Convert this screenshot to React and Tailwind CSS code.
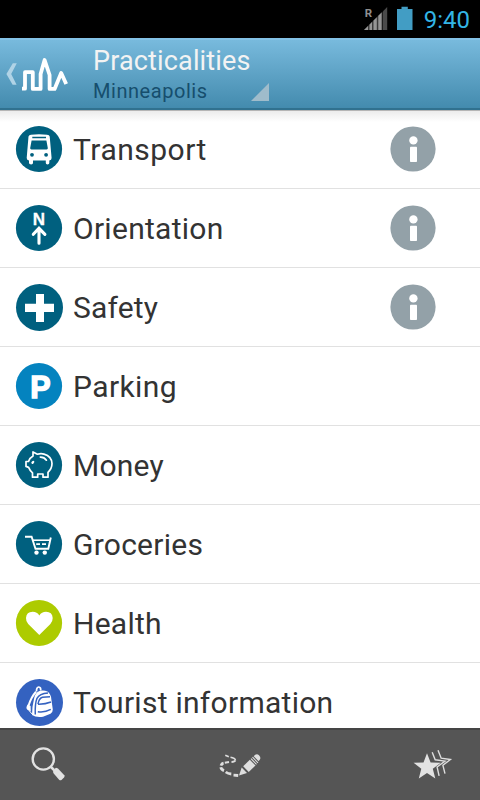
import React from 'react';

const rows = [
  { label: 'Transport', icon: 'bus', color: '#00607f', info: true, spacing: 'tracking-[0.5px]' },
  { label: 'Orientation', icon: 'north', color: '#00607f', info: true, spacing: 'tracking-[0.28px]' },
  { label: 'Safety', icon: 'plus', color: '#00607f', info: true, spacing: 'tracking-[0.15px]' },
  { label: 'Parking', icon: 'parking', color: '#0483bf', spacing: 'tracking-[0.4px]' },
  { label: 'Money', icon: 'pig', color: '#00607f', spacing: 'tracking-[0.2px]' },
  { label: 'Groceries', icon: 'cart', color: '#00607f', spacing: 'tracking-[0.25px]' },
  { label: 'Health', icon: 'heart', color: '#adcb00', spacing: 'tracking-[0.25px]' },
  { label: 'Tourist information', icon: 'pack', color: '#3462c0', spacing: 'tracking-[0.27px]' },
];

const glyphs = {
  bus: (
    <>
      <path fill="#fff" d="M13.5 11.5Q14 10 16 9.8Q24 8.7 32 9.8Q34.5 10 34.7 11.5L36.6 33Q36.6 35.2 34.3 35.4V38Q34.3 39.4 32.5 39.4Q30.8 39.4 30.8 38V35.4H18V38Q18 39.4 16.2 39.4Q14 39.4 14 38V35.4Q11.7 35.2 11.7 33Z" />
      <path fill="#00607f" d="M17.3 11.7H31V13.2H17.3ZM16.6 15.6H31.4L32.8 23Q33 24.4 31.6 24.4H16.4Q15 24.4 15.2 23Z" />
      <circle cx="17" cy="29.8" r="1.9" fill="#00607f" />
      <circle cx="31.1" cy="29.8" r="1.9" fill="#00607f" />
    </>
  ),
  north: (
    <>
      <text x="23.9" y="20.6" textAnchor="middle" fill="#fff" stroke="#fff" strokeWidth=".3" className="font-['Liberation_Sans',sans-serif] text-[17px] font-bold">N</text>
      <path fill="none" stroke="#fff" strokeWidth="3.1" strokeLinecap="round" d="M24 25V39.3M18.3 30.3L24 24.3L29.9 30.3" />
    </>
  ),
  plus: <path fill="#fff" d="M21 11H29V20.7H39V29H29V39H21V29H10V20.7H21Z" />,
  parking: (
    <text x="25.4" y="35.5" textAnchor="middle" fill="#fff" stroke="#fff" strokeWidth="1.4" className="font-['Liberation_Sans',sans-serif] text-[30.5px] font-bold">P</text>
  ),
  pig: (
    <g fill="none" stroke="#fff" strokeWidth="1.7" strokeLinejoin="round" strokeLinecap="round">
      <path d="M18 15V10.9L22.4 13.2Q26 12.2 29 13.1Q36.8 15.5 37 22.5Q37 27.5 33 31.3V36.2H28V33H22.7V36.2H17.5V31.8Q15 29.8 13.6 26.4L11 25.4V20.5H13.5Q14.5 17 18 15Z" />
      <path strokeWidth="1.7" d="M25.3 16.1Q29.2 16 31.4 19.2" />
      <path strokeWidth="2.3" d="M17.5 21.8L18.2 20.9" />
    </g>
  ),
  cart: (
    <g fill="none" stroke="#fff" strokeWidth="1.6">
      <path strokeWidth="1.9" d="M10 16.8H16.6L20.5 28.7H33.3L35.8 17.5" />
      <path d="M17.8 20.2H35" />
      <path strokeWidth="1.8" d="M21.2 24.2H25M27 24.2H31" />
      <circle cx="21.5" cy="32.6" r="2.2" fill="#fff" stroke="none" />
      <circle cx="29.8" cy="32.6" r="2.2" fill="#fff" stroke="none" />
    </g>
  ),
  heart: <path fill="#fff" d="M24.3 36L13.2 25Q10.8 22.2 11 19Q11.4 12.8 17.7 12.8Q22.2 12.8 24.3 16.4Q26.6 12.8 31 12.8Q37.3 12.8 37.7 19Q37.8 22.2 35.4 25Z" />,
  pack: (
    <>
      <path fill="#fff" d="M22.5 14Q27 11.5 32.5 13.5Q36 16 36.3 21L37.8 31.5Q37.8 34.5 35.5 35.8L28 38.7Q21 39.7 17 37Q17 29 18.8 22Q19.5 16.5 22.5 14Z" />
      <path fill="none" stroke="#fff" strokeWidth="1.7" d="M21.5 13.5Q21.4 8.9 23.8 9Q26 9.2 25.7 12.5" />
      <path fill="none" stroke="#fff" strokeWidth="2" d="M21 13.8Q16.2 19 13.2 28.5" />
      <path fill="#fff" d="M12.6 26.5L15.6 28L15.8 33.5L12.4 31.8Q10.4 30 12.6 26.5Z" />
      <path fill="none" stroke="#fff" strokeWidth="1" d="M14 32.5L17.5 36.5" />
      <path fill="none" stroke="#3462c0" strokeWidth="1.5" d="M20.3 36.5Q19.8 26 22 20.3Q24.5 15.6 33 15M23 26.2Q24 20 27.5 19.2L35 18.8M23 26.2Q30 26.4 36 24M22.8 33.7Q29.5 34.8 35.8 31.4" />
    </>
  ),
};

function CategoryIcon({ name, color }) {
  const wide = name === 'plus' || name === 'pack';
  return (
    <svg viewBox="0 0 48 48" className="size-12 shrink-0">
      <circle cx={wide ? 24.5 : 24} cy={wide ? 24.5 : 24} r={wide ? 23.5 : 23.1} fill={color} />
      {glyphs[name]}
    </svg>
  );
}

function StatusBar() {
  return (
    <div className="flex h-[38px] shrink-0 items-center justify-end bg-black pr-[10px]">
      <svg viewBox="0 0 60 38" className="h-[38px] w-[60px]">
        <path d="M3 30L21.5 11.5V30Z" fill="#3a3a3a" />
        <path d="M3 30L7 26V30ZM8.5 24.5L11 22V30H8.5ZM12.5 20.5L15.8 17.2V30H12.5ZM17.3 15.7L20.6 12.4V30H17.3Z" fill="#959595" />
        <path d="M22 11.2L26.2 7V30H22Z" fill="#4a4a4a" />
        <text x="3.8" y="17" fill="#909090" className="font-[Roboto,sans-serif] text-[11.5px] font-bold">R</text>
        <path d="M36 9H40.5V6.7H46.8V9H51.5V30H36Z" fill="#429dc4" />
      </svg>
      <div className="w-[49px] pt-px text-right text-[24px] leading-[38px] text-[#33b5e5]">9:40</div>
    </div>
  );
}

function Header() {
  return (
    <header className="flex h-[72px] shrink-0 border-t-2 border-b-2 border-t-[#83c2e6] border-b-[#30718f] bg-linear-to-b from-[#78badd] to-[#438bae]">
      <svg viewBox="0 40 93 68" className="h-[68px] w-[93px] shrink-0">
        <path d="M12.8 63.3H16.8L11.2 74L16.6 84.7H12.6L6.4 74Z" fill="#b0d3e6" />
        <path d="M22 88.7H25V72.2H32.8V88.9H40.6V74L44.6 60L49.6 75V88.9H54.6L61.2 73L66.2 84" fill="none" stroke="#fff" strokeWidth="3.8" strokeLinejoin="round" />
      </svg>
      <div className="flex w-[177px] flex-col">
        <h1 className="h-[38px] pt-[5px] text-[27px] leading-[32px] tracking-[0.15px] text-[#f3f3f3]">Practicalities</h1>
        <div className="flex h-[26px] justify-between">
          <span className="text-[20px] leading-[26px] tracking-[0.55px] text-[#164e6d]">Minneapolis</span>
          <svg viewBox="0 0 19 26" className="h-[26px] w-[19px]">
            <path d="M18 5V23H0Z" fill="#9fbccb" />
          </svg>
        </div>
      </div>
    </header>
  );
}

function InfoIcon() {
  return (
    <svg viewBox="0 0 46 46" className="size-[46px] shrink-0">
      <circle cx="23" cy="23" r="22.6" fill="#93a1a8" />
      <circle cx="23.4" cy="14.4" r="4.2" fill="#fff" />
      <rect x="20" y="20.7" width="7" height="15.3" rx=".8" fill="#fff" />
    </svg>
  );
}

function Toolbar() {
  return (
    <footer className="flex h-[72px] shrink-0 justify-between border-t-2 border-[#454545] bg-[#555]">
      <svg viewBox="0 730 96 70" className="h-[70px] w-24">
        <circle cx="43.3" cy="759" r="10.6" fill="none" stroke="#e2e2e2" strokeWidth="2.4" />
        <path d="M50.5 766.5L54 770" stroke="#e2e2e2" strokeWidth="2.5" />
        <path d="M53 770.3L56 767.8L58 768.6L64.3 775.3Q65 776.5 64 777.5L61.5 780Q60.3 780.7 59.3 780L53.3 773Z" fill="#e2e2e2" />
      </svg>
      <svg viewBox="192 730 96 70" className="h-[70px] w-24">
        <g fill="none" stroke="#dedede">
          <path strokeWidth="1.6" d="M225.3 755.3L228.8 756.8M230.5 757.3Q235 758 235.5 760.3" />
          <path strokeWidth="2" d="M235.2 760.3Q234.6 761.8 231.5 761.9M229 762.1L224.8 762.8" />
          <path strokeWidth="2.8" d="M223.6 763.2Q221.5 763.7 221 765.6M220.8 767.3Q221.3 769.7 224 770.6M225.7 772Q228 773.8 231.3 774M233.5 775.2L238.2 775.5" />
        </g>
        <path fill="#dedede" d="M239 775.5L241.7 767.6L247 773Z" />
        <path fill="#dedede" d="M243.2 766.3L249.8 759.7L255.5 765.5L248.7 772Z" />
        <path stroke="#dedede" strokeWidth="1.1" d="M251 758.7L256.5 764.3M252.5 757.2L258 762.8" />
        <path fill="#dedede" d="M253.7 756.3L255.2 754.8Q257.2 753.5 259 755.3Q261.2 757.7 259.9 759.6L258.6 761.2Z" />
      </svg>
      <svg viewBox="384 730 96 70" className="h-[70px] w-24">
        <path fill="#e2e2e2" d="M427 753.3L430.6 762.4L440.8 762.8L432.8 768.8L435.3 778.4L427 773L418.8 778.4L421.3 768.8L413.6 762.8L423.5 762.4Z" />
        <path fill="none" stroke="#dedede" strokeWidth="1.4" d="M432.2 752.3L435.2 759.8L445 761.1L437.1 767L439.1 775.8M438 750.3L441.2 758.2L450.4 759.5L442.9 765.3L445 773.7" />
      </svg>
    </footer>
  );
}

export default function App() {
  return (
    <div className="flex h-[800px] w-[480px] flex-col overflow-hidden bg-white font-[Roboto,sans-serif]">
      <StatusBar />
      <Header />
      <main className="min-h-0 flex-1 overflow-hidden border-t border-[#b5b5b5] bg-linear-to-b from-[#ececec] via-white via-[1.8%] to-white">
        {rows.map((row) => (
          <div key={row.label} className="flex h-[79px] items-center border-b border-[#e1e1e1] pr-[44px] pl-[15px] first:h-[78px] first:pb-px">
            <CategoryIcon name={row.icon} color={row.color} />
            <span className={`flex-1 pt-[2px] pl-[10px] text-[30px] leading-[40px] whitespace-nowrap text-[#333] ${row.spacing}`}>{row.label}</span>
            {row.info && <InfoIcon />}
          </div>
        ))}
      </main>
      <Toolbar />
    </div>
  );
}
